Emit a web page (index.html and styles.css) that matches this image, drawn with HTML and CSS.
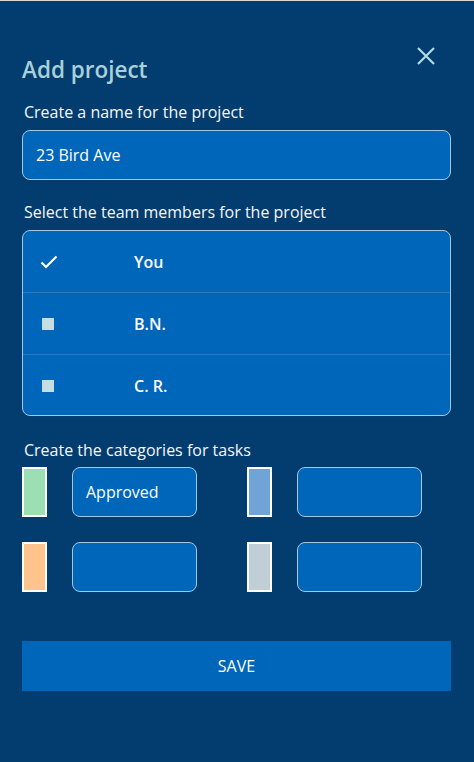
FILE: index.html
```html
<!DOCTYPE html>
<html>
<head>
<meta charset="utf-8">
<link rel="stylesheet" href="styles.css">
</head>
<body>
<div class="modal">
  <div class="header">
    <h1 class="title">Add project</h1>
    <button class="close" aria-label="Close">
      <svg width="20" height="20" viewBox="0 0 20 20"><path d="M2 2L18 18M18 2L2 18" stroke="#b3dbe3" stroke-width="2.2" fill="none"/></svg>
    </button>
  </div>
  <div class="label l1">Create a name for the project</div>
  <div class="input name">23 Bird Ave</div>
  <div class="label l2">Select the team members for the project</div>
  <div class="list">
    <div class="row">
      <span class="mark"><svg width="18" height="14" viewBox="0 0 18 14"><path d="M1.5 7.5L6 12L16.5 1.5" stroke="#ffffff" stroke-width="2.2" fill="none"/></svg></span>
      <span class="member">You</span>
    </div>
    <div class="row">
      <span class="mark"><span class="square"></span></span>
      <span class="member">B.N.</span>
    </div>
    <div class="row">
      <span class="mark"><span class="square"></span></span>
      <span class="member">C. R.</span>
    </div>
  </div>
  <div class="label l3">Create the categories for tasks</div>
  <div class="cats">
    <div class="cat"><span class="swatch green"></span><div class="input cat-input">Approved</div></div>
    <div class="cat"><span class="swatch blue"></span><div class="input cat-input"></div></div>
    <div class="cat"><span class="swatch orange"></span><div class="input cat-input"></div></div>
    <div class="cat"><span class="swatch gray"></span><div class="input cat-input"></div></div>
  </div>
  <button class="save">SAVE</button>
</div>
</body>
</html>
```
FILE: styles.css
```css
html, body {
  margin: 0;
  padding: 0;
  background: #033c6e;
}
body {
  border-top: 1px solid #d8d8d8;
  font-family: "Open Sans", "Noto Sans", sans-serif;
  color: #ffffff;
}
.modal {
  padding: 0 23px 0 22px;
  height: 761px;
  box-sizing: border-box;
  background: #033c6e;
}
.header {
  display: flex;
  justify-content: space-between;
  align-items: flex-start;
}
.title {
  margin: 54px 0 0 0;
  font-size: 22.5px;
  line-height: 30px;
  font-weight: 600;
  color: #a8d0da;
}
.close {
  margin: 45px 15px 0 0;
  padding: 0;
  border: 0;
  background: none;
  width: 20px;
  height: 20px;
  display: block;
}
.close svg { display: block; }
.label {
  font-size: 16px;
  line-height: 20px;
  padding-left: 2px;
  color: #f4f7fa;
}
.l1 { margin-top: 17px; }
.l2 { margin-top: 22px; }
.l3 { margin-top: 24px; }
.input {
  box-sizing: border-box;
  background: #0066b9;
  border: 1px solid #a9c6dc;
  border-radius: 8px;
  font-size: 16px;
  color: #ffffff;
  display: flex;
  align-items: center;
}
.name {
  margin-top: 8px;
  height: 50px;
  padding-left: 13px;
}
.list {
  margin-top: 8px;
  box-sizing: border-box;
  background: #0066b9;
  border: 1px solid #a9c6dc;
  border-radius: 8px;
  height: 186px;
}
.row {
  height: 61px;
  display: flex;
  align-items: center;
  font-size: 16px;
  font-weight: 600;
}
.row + .row {
  border-top: 1px solid #2c7cc2;
}
.mark {
  width: 111px;
  padding-left: 17px;
  box-sizing: border-box;
  display: flex;
  align-items: center;
}
.mark svg { display: block; }
.square {
  display: block;
  width: 12px;
  height: 12px;
  margin-left: 2px;
  background: #c6dde3;
}
.cats {
  margin-top: 7px;
  display: grid;
  grid-template-columns: 175px 175px;
  column-gap: 50px;
  row-gap: 25px;
}
.cat {
  display: flex;
  gap: 25px;
}
.swatch {
  box-sizing: border-box;
  width: 25px;
  height: 50px;
  border: 2px solid #ffffff;
}
.green { background: #9cdfb2; }
.blue { background: #70a4d6; }
.orange { background: #ffc48e; }
.gray { background: #c0ced6; }
.cat-input {
  width: 125px;
  height: 50px;
  padding-left: 13px;
}
.save {
  display: block;
  margin-top: 49px;
  width: 100%;
  height: 50px;
  border: 0;
  background: #0066b9;
  color: #ffffff;
  font-family: "Open Sans", "Noto Sans", sans-serif;
  font-size: 16px;
  padding: 0;
}
```
